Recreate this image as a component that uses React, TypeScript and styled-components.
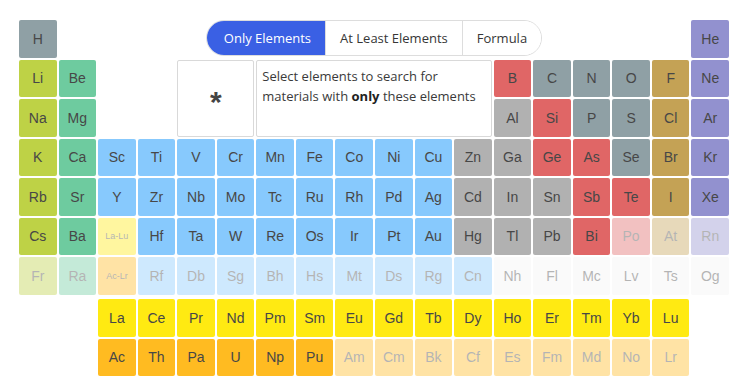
import React from "react";
import styled, { createGlobalStyle } from "styled-components";

const GlobalStyle = createGlobalStyle`
  body {
    margin: 0;
    background: #ffffff;
    font-family: "Open Sans", "Liberation Sans", sans-serif;
  }
`;

const colors: Record<string, string> = {
  nonmetal: "#8fa0a5",
  alkali: "#bed246",
  alkaline: "#6ecb9f",
  transition: "#87c9fd",
  post: "#b1b1b1",
  metalloid: "#e06666",
  halogen: "#c4a255",
  noble: "#9291cf",
  unknown: "#f4f4f4",
  lanthanide: "#ffea12",
  actinide: "#ffbb21",
};

type El = { s: string; c: string; off?: boolean; small?: boolean };

const e = (s: string, c: string, off = false): El => ({ s, c, off });

const rows: (El | null)[][] = [
  [e("H", "nonmetal"), ...Array(16).fill(null), e("He", "noble")],
  [
    e("Li", "alkali"), e("Be", "alkaline"), ...Array(10).fill(null),
    e("B", "metalloid"), e("C", "nonmetal"), e("N", "nonmetal"), e("O", "nonmetal"), e("F", "halogen"), e("Ne", "noble"),
  ],
  [
    e("Na", "alkali"), e("Mg", "alkaline"), ...Array(10).fill(null),
    e("Al", "post"), e("Si", "metalloid"), e("P", "nonmetal"), e("S", "nonmetal"), e("Cl", "halogen"), e("Ar", "noble"),
  ],
  [
    e("K", "alkali"), e("Ca", "alkaline"),
    ...["Sc", "Ti", "V", "Cr", "Mn", "Fe", "Co", "Ni", "Cu"].map((s) => e(s, "transition")),
    e("Zn", "post"), e("Ga", "post"), e("Ge", "metalloid"), e("As", "metalloid"), e("Se", "nonmetal"), e("Br", "halogen"), e("Kr", "noble"),
  ],
  [
    e("Rb", "alkali"), e("Sr", "alkaline"),
    ...["Y", "Zr", "Nb", "Mo", "Tc", "Ru", "Rh", "Pd", "Ag"].map((s) => e(s, "transition")),
    e("Cd", "post"), e("In", "post"), e("Sn", "post"), e("Sb", "metalloid"), e("Te", "metalloid"), e("I", "halogen"), e("Xe", "noble"),
  ],
  [
    e("Cs", "alkali"), e("Ba", "alkaline"), { s: "La-Lu", c: "lanthanide", off: true, small: true },
    ...["Hf", "Ta", "W", "Re", "Os", "Ir", "Pt", "Au"].map((s) => e(s, "transition")),
    e("Hg", "post"), e("Tl", "post"), e("Pb", "post"), e("Bi", "metalloid"),
    e("Po", "metalloid", true), e("At", "halogen", true), e("Rn", "noble", true),
  ],
  [
    e("Fr", "alkali", true), e("Ra", "alkaline", true), { s: "Ac-Lr", c: "actinide", off: true, small: true },
    ...["Rf", "Db", "Sg", "Bh", "Hs", "Mt", "Ds", "Rg", "Cn"].map((s) => e(s, "transition", true)),
    ...["Nh", "Fl", "Mc", "Lv", "Ts", "Og"].map((s) => e(s, "unknown", true)),
  ],
];

const lanthanides = ["La", "Ce", "Pr", "Nd", "Pm", "Sm", "Eu", "Gd", "Tb", "Dy", "Ho", "Er", "Tm", "Yb", "Lu"];
const actinides = ["Ac", "Th", "Pa", "U", "Np", "Pu", "Am", "Cm", "Bk", "Cf", "Es", "Fm", "Md", "No", "Lr"];

const Page = styled.div`
  padding: 20px 11px 0 19px;
  width: 710px;
`;

const Grid = styled.div`
  display: grid;
  grid-template-columns: repeat(18, 1fr);
  grid-auto-rows: 37.5px;
  gap: 2px;
`;

const SeriesGrid = styled(Grid)`
  margin-top: 4.5px;
`;

const Cell = styled.div<{ $bg: string; $off?: boolean; $small?: boolean; $col: number; $row: number }>`
  grid-column: ${(p) => p.$col};
  grid-row: ${(p) => p.$row};
  display: flex;
  align-items: center;
  justify-content: center;
  background: ${(p) => p.$bg};
  opacity: ${(p) => (p.$off ? 0.4 : 1)};
  border-radius: 2px;
  color: #474747;
  font-family: "Liberation Sans", Arial, sans-serif;
  font-size: ${(p) => (p.$small ? "9px" : "14px")};
  cursor: pointer;
  user-select: none;
`;

const Toggle = styled.div`
  grid-column: 3 / 17;
  grid-row: 1;
  justify-self: center;
  align-self: start;
  display: flex;
  height: 36px;
  box-sizing: border-box;
  border: 1px solid #dddddd;
  border-radius: 18px;
  overflow: hidden;
`;

const ToggleButton = styled.button<{ $active?: boolean; $first?: boolean }>`
  border: none;
  border-left: ${(p) => (p.$first ? "none" : "1px solid #dddddd")};
  background: ${(p) => (p.$active ? "#3a60e4" : "#ffffff")};
  color: ${(p) => (p.$active ? "#ffffff" : "#363636")};
  font-family: "Open Sans", sans-serif;
  font-size: 13px;
  padding: 0 14px;
  cursor: pointer;
  &:first-child {
    padding-left: 17px;
  }
`;

const InfoBox = styled.div<{ $col: string }>`
  grid-column: ${(p) => p.$col};
  grid-row: 2 / 4;
  box-sizing: border-box;
  border: 1px solid #d9d9d9;
  border-radius: 2px;
  background: #ffffff;
`;

const StarBox = styled(InfoBox)`
  display: flex;
  align-items: center;
  justify-content: center;
  font-family: "Liberation Sans", Arial, sans-serif;
  font-size: 30px;
  font-weight: bold;
  color: #444444;
  padding-top: 8px;
`;

const Description = styled(InfoBox)`
  padding: 5px 5px;
  font-size: 13px;
  line-height: 20px;
  color: #3a3a3a;
  b {
    font-weight: 700;
    color: #222;
  }
`;

export default function App() {
  return (
    <>
      <GlobalStyle />
      <Page>
        <Grid>
          {rows.map((row, r) =>
            row.map((el, c) =>
              el ? (
                <Cell
                  key={el.s}
                  $bg={colors[el.c]}
                  $off={el.off}
                  $small={el.small}
                  $col={c + 1}
                  $row={r + 1}
                >
                  {el.s}
                </Cell>
              ) : null
            )
          )}
          <Toggle>
            <ToggleButton $active $first>Only Elements</ToggleButton>
            <ToggleButton>At Least Elements</ToggleButton>
            <ToggleButton>Formula</ToggleButton>
          </Toggle>
          <StarBox $col="5 / 7">*</StarBox>
          <Description $col="7 / 13">
            Select elements to search for materials with <b>only</b> these elements
          </Description>
        </Grid>
        <SeriesGrid>
          {lanthanides.map((s, i) => (
            <Cell key={s} $bg={colors.lanthanide} $col={i + 3} $row={1}>
              {s}
            </Cell>
          ))}
          {actinides.map((s, i) => (
            <Cell key={s} $bg={colors.actinide} $off={i > 5} $col={i + 3} $row={2}>
              {s}
            </Cell>
          ))}
        </SeriesGrid>
      </Page>
    </>
  );
}
